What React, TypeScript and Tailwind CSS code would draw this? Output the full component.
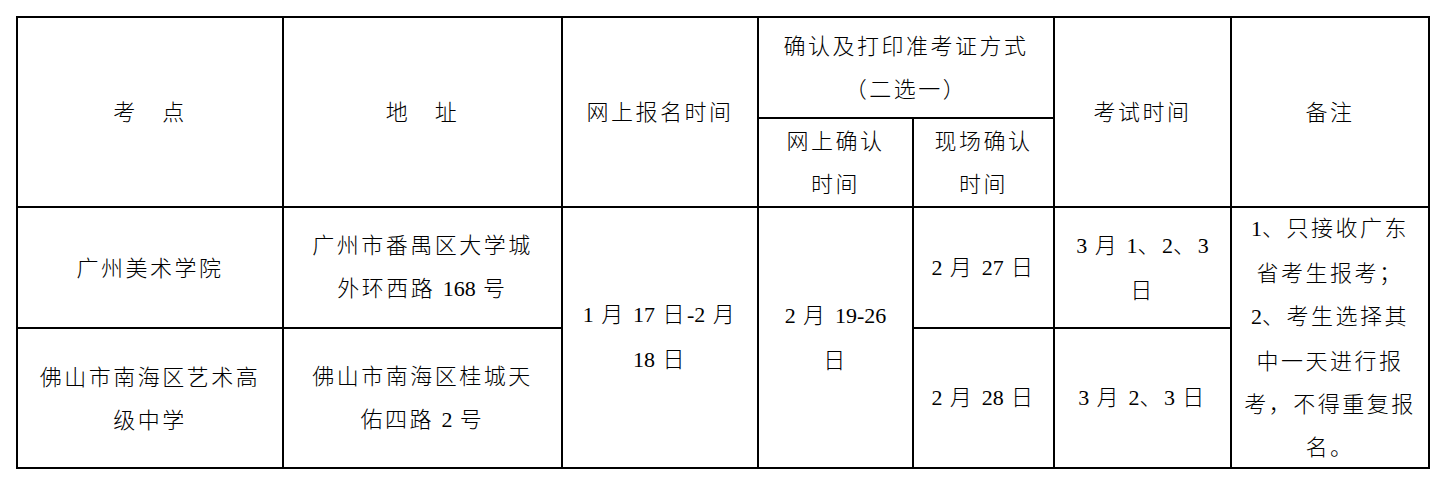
import React from 'react'

const font =
  "font-['Noto_Sans_CJK_SC',sans-serif] font-light text-black text-[22px] tracking-[2.5px] leading-[43px]"

function Cell({ className = '', children }: { className?: string; children: React.ReactNode }) {
  return (
    <div className={`bg-white flex items-center justify-center text-center pb-[3px] ${className}`}>
      <div>{children}</div>
    </div>
  )
}

// digits sit tight and in a serif face, like the Latin run in the source document
function N({ children }: { children: React.ReactNode }) {
  return <span className="font-['Liberation_Serif',serif] font-normal tracking-normal">{children}</span>
}

export default function App() {
  return (
    <div className="min-h-screen bg-white pt-[16px] pl-[16px]">
      <div
        className={`grid w-fit gap-[2px] bg-black p-[2px] grid-cols-[264px_277px_194px_153px_139px_175px_196px] grid-rows-[99px_87px_119px_138px] ${font}`}
      >
        {/* header */}
        <Cell className="col-start-1 row-start-1 row-span-2">考　点</Cell>
        <Cell className="col-start-2 row-start-1 row-span-2">地　址</Cell>
        <Cell className="col-start-3 row-start-1 row-span-2">网上报名时间</Cell>
        <Cell className="col-start-4 col-span-2 row-start-1">
          确认及打印准考证方式
          <br />
          （二选一）
        </Cell>
        <Cell className="col-start-6 row-start-1 row-span-2">考试时间</Cell>
        <Cell className="col-start-7 row-start-1 row-span-2">备注</Cell>
        <Cell className="col-start-4 row-start-2">
          网上确认
          <br />
          时间
        </Cell>
        <Cell className="col-start-5 row-start-2">
          现场确认
          <br />
          时间
        </Cell>

        {/* body */}
        <Cell className="col-start-1 row-start-3">广州美术学院</Cell>
        <Cell className="col-start-2 row-start-3">
          广州市番禺区大学城
          <br />
          外环西路 <N>168</N> 号
        </Cell>
        <Cell className="col-start-3 row-start-3 row-span-2">
          <N>1</N> 月 <N>17</N> 日<N>-2</N> 月
          <br />
          <N>18</N> 日
        </Cell>
        <Cell className="col-start-4 row-start-3 row-span-2">
          <N>2</N> 月 <N>19-26</N>
          <br />
          日
        </Cell>
        <Cell className="col-start-5 row-start-3">
          <N>2</N> 月 <N>27</N> 日
        </Cell>
        <Cell className="col-start-6 row-start-3">
          <N>3</N> 月 <N>1</N>、<N>2</N>、<N>3</N>
          <br />
          日
        </Cell>
        <Cell className="col-start-7 row-start-3 row-span-2">
          <N>1</N>、只接收广东
          <br />
          省考生报考；
          <br />
          <N>2</N>、考生选择其
          <br />
          中一天进行报
          <br />
          考，不得重复报
          <br />
          名。
        </Cell>

        <Cell className="col-start-1 row-start-4">
          佛山市南海区艺术高
          <br />
          级中学
        </Cell>
        <Cell className="col-start-2 row-start-4">
          佛山市南海区桂城天
          <br />
          佑四路 <N>2</N> 号
        </Cell>
        <Cell className="col-start-5 row-start-4">
          <N>2</N> 月 <N>28</N> 日
        </Cell>
        <Cell className="col-start-6 row-start-4">
          <N>3</N> 月 <N>2</N>、<N>3</N> 日
        </Cell>
      </div>
    </div>
  )
}
